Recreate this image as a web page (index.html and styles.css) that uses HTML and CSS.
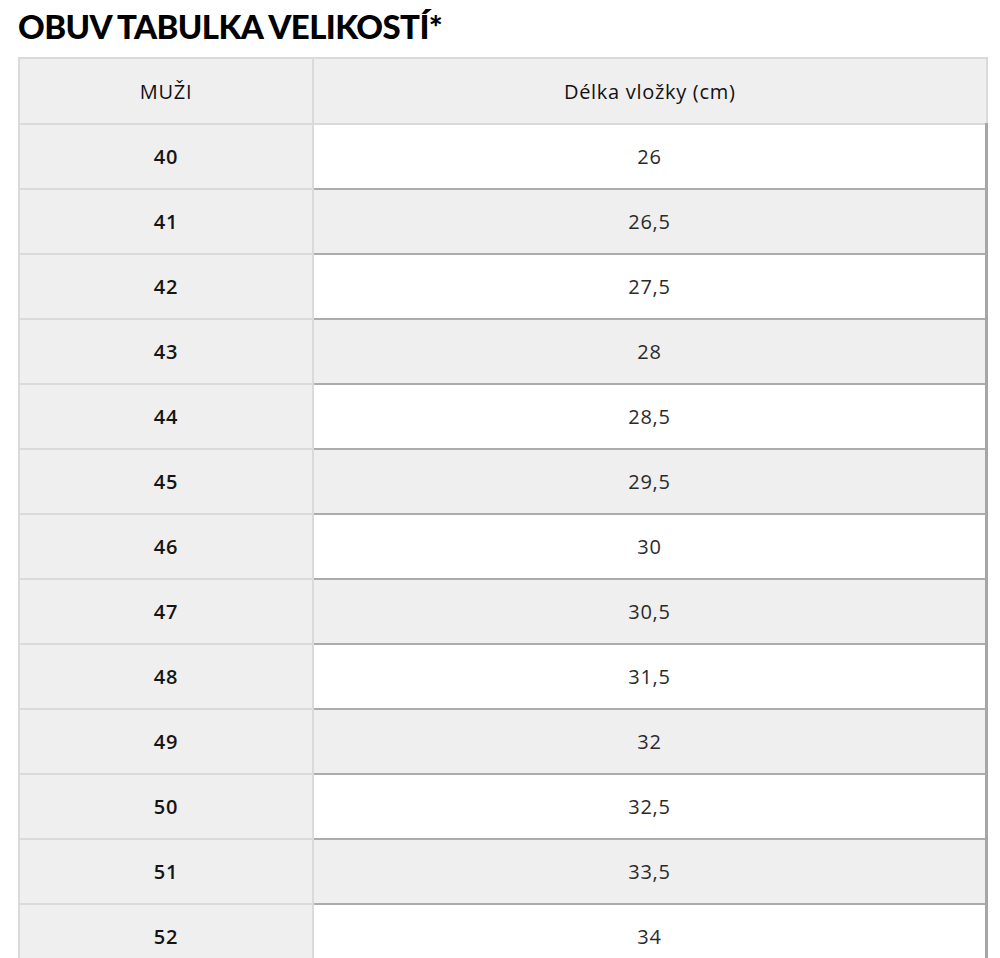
FILE: index.html
```html
<!DOCTYPE html>
<html lang="cs">
<head>
<meta charset="utf-8">
<title>Obuv tabulka velikostí</title>
<link rel="stylesheet" href="styles.css">
</head>
<body>
<h1 class="title">OBUV TABULKA VELIKOSTÍ*</h1>
<table class="sizes">
  <thead>
    <tr><th class="c1">MUŽI</th><th class="c2">Délka vložky (cm)</th></tr>
  </thead>
  <tbody>
    <tr><td class="c1">40</td><td class="c2">26</td></tr>
    <tr class="alt"><td class="c1">41</td><td class="c2">26,5</td></tr>
    <tr><td class="c1">42</td><td class="c2">27,5</td></tr>
    <tr class="alt"><td class="c1">43</td><td class="c2">28</td></tr>
    <tr><td class="c1">44</td><td class="c2">28,5</td></tr>
    <tr class="alt"><td class="c1">45</td><td class="c2">29,5</td></tr>
    <tr><td class="c1">46</td><td class="c2">30</td></tr>
    <tr class="alt"><td class="c1">47</td><td class="c2">30,5</td></tr>
    <tr><td class="c1">48</td><td class="c2">31,5</td></tr>
    <tr class="alt"><td class="c1">49</td><td class="c2">32</td></tr>
    <tr><td class="c1">50</td><td class="c2">32,5</td></tr>
    <tr class="alt"><td class="c1">51</td><td class="c2">33,5</td></tr>
    <tr><td class="c1">52</td><td class="c2">34</td></tr>
  </tbody>
</table>
</body>
</html>
```
FILE: styles.css
```css
html, body { margin: 0; padding: 0; background: #fff; }
body { padding: 0 12px 0 18px; font-family: "Open Sans", Lato, sans-serif; color: #111; }
.title {
  margin: 0;
  padding-top: 8px;
  height: 49px;
  font-family: Lato, Inter, sans-serif;
  font-weight: 900;
  font-size: 33px;
  line-height: 36px;
  letter-spacing: -0.6px;
  color: #000;
}
.sizes {
  width: 970px;
  border-collapse: collapse;
  table-layout: fixed;
}
.sizes th, .sizes td {
  height: 63px;
  padding: 0;
  text-align: center;
  vertical-align: middle;
  font-size: 20px;
  letter-spacing: 0.7px;
}
.sizes .c1 {
  width: 292px;
  background: #efefef;
  border: 2px solid #dadada;
  font-weight: 600;
  color: #151515;
}
.sizes th.c1 { font-weight: 400; color: #111; }
.sizes th.c2 {
  background: #efefef;
  border: 2px solid #dadada;
  font-weight: 400;
  color: #111;
}
.sizes th { height: 64px; }
.sizes td.c2 {
  background: #fff;
  border-bottom: 2px solid #acacac;
  border-right: 3px solid #a6a6a6;
  font-weight: 400;
  color: #2a2a2a;
}
.sizes tr.alt td.c2 { background: #efefef; }
```
